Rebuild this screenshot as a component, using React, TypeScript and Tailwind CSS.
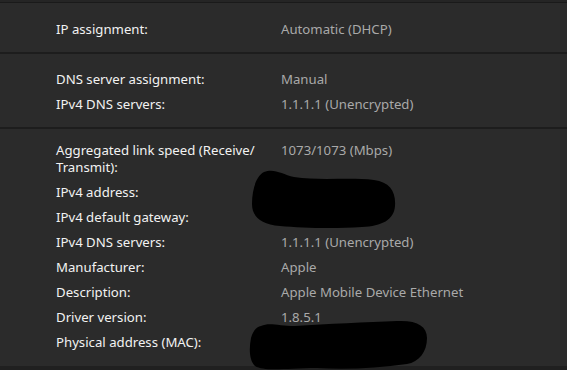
const rows1 = [{ label: 'IP assignment:', value: 'Automatic (DHCP)' }]

const rows2 = [
  { label: 'DNS server assignment:', value: 'Manual' },
  { label: 'IPv4 DNS servers:', value: '1.1.1.1 (Unencrypted)' },
]

const rows3 = [
  { label: 'Aggregated link speed (Receive/ Transmit):', value: '1073/1073 (Mbps)' },
  { label: 'IPv4 address:', value: '' },
  { label: 'IPv4 default gateway:', value: '' },
  { label: 'IPv4 DNS servers:', value: '1.1.1.1 (Unencrypted)' },
  { label: 'Manufacturer:', value: 'Apple' },
  { label: 'Description:', value: 'Apple Mobile Device Ethernet' },
  { label: 'Driver version:', value: '1.8.5.1' },
  { label: 'Physical address (MAC):', value: '' },
]

function Row({ label, value }: { label: string; value: string }) {
  return (
    <div className="flex py-1 leading-[17px]">
      <div className="w-[207px] shrink-0 text-[#f2f2f2]">{label}</div>
      <div className="ml-[18px] text-[#a9a9a9]">{value}</div>
    </div>
  )
}

export default function App() {
  return (
    <div className="relative h-[370px] w-[567px] overflow-hidden bg-[#202020] font-['Segoe_UI','Noto_Sans',sans-serif] text-[13.2px]">
      <div className="h-[3px] border-b border-[#1a1a1a] bg-[#252525]" />
      {/* IP */}
      <div className="bg-[#2b2b2b] pl-14 pt-[14px] pb-[10px]">
        {rows1.map((r) => (
          <Row key={r.label} {...r} />
        ))}
      </div>
      <div className="h-[2px] bg-[#1d1d1d]" />
      {/* DNS */}
      <div className="bg-[#2b2b2b] pl-14 pt-[13px] pb-[10px]">
        {rows2.map((r) => (
          <Row key={r.label} {...r} />
        ))}
      </div>
      <div className="h-[2px] bg-[#1d1d1d]" />
      {/* Adapter details */}
      <div className="h-[237px] bg-[#2b2b2b] pl-14 pt-[9px]">
        {rows3.map((r) => (
          <Row key={r.label} {...r} />
        ))}
      </div>

      {/* redaction scribbles */}
      <svg className="absolute left-[250px] top-[168px]" width="148" height="62" viewBox="0 0 148 62">
        <path
          d="M14 4 C24 0 32 6 44 9 C70 13 100 9 124 12 C140 14 146 24 145 38 C144 52 132 58 112 59 C84 61 52 60 30 58 C10 56 2 48 2 36 C2 22 6 8 14 4 Z"
          fill="#000"
        />
      </svg>
      <svg className="absolute left-[247px] top-[318px]" width="185" height="56" viewBox="0 0 185 56">
        <path
          d="M14 8 C22 4 32 8 48 8 C80 6 120 4 150 3 C170 2 180 8 180 20 C180 34 172 44 160 46 C130 50 100 52 70 50 C40 50 18 54 8 48 C2 42 2 30 4 20 C6 12 10 9 14 8 Z"
          fill="#000"
        />
      </svg>
    </div>
  )
}
